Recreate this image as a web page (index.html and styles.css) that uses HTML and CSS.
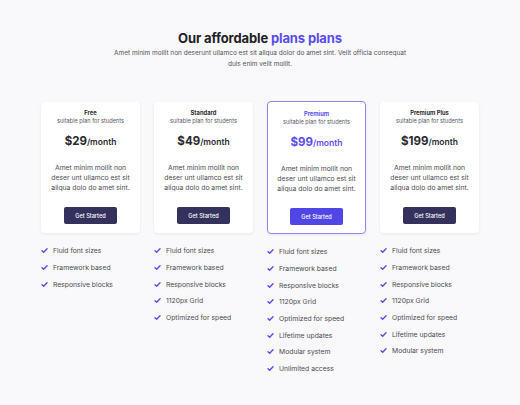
FILE: index.html
```html
<!DOCTYPE html>
<html lang="en">
<head>
<meta charset="utf-8">
<title>Pricing</title>
<link rel="stylesheet" href="styles.css">
</head>
<body>
<main class="page">
  <header class="intro">
    <h1 class="title">Our affordable <span class="accent">plans plans</span></h1>
    <p class="lead">Amet minim mollit non deserunt ullamco est sit aliqua dolor do amet sint. Velit officia consequat duis enim velit mollit.</p>
  </header>

  <section class="plans">
    <div class="plan">
      <div class="card">
        <p class="name">Free</p>
        <p class="sub">suitable plan for students</p>
        <p class="price"><span class="amount">$29</span>/month</p>
        <p class="desc">Amet minim mollit non deser unt ullamco est sit aliqua dolo do amet sint.</p>
        <button class="btn">Get Started</button>
      </div>
      <ul class="features">
        <li><svg class="check" viewBox="0 0 10 10"><path d="M1.5 5.2 L3.8 7.4 L8.6 2.4"/></svg>Fluid font sizes</li>
        <li><svg class="check" viewBox="0 0 10 10"><path d="M1.5 5.2 L3.8 7.4 L8.6 2.4"/></svg>Framework based</li>
        <li><svg class="check" viewBox="0 0 10 10"><path d="M1.5 5.2 L3.8 7.4 L8.6 2.4"/></svg>Responsive blocks</li>
      </ul>
    </div>

    <div class="plan">
      <div class="card">
        <p class="name">Standard</p>
        <p class="sub">suitable plan for students</p>
        <p class="price"><span class="amount">$49</span>/month</p>
        <p class="desc">Amet minim mollit non deser unt ullamco est sit aliqua dolo do amet sint.</p>
        <button class="btn">Get Started</button>
      </div>
      <ul class="features">
        <li><svg class="check" viewBox="0 0 10 10"><path d="M1.5 5.2 L3.8 7.4 L8.6 2.4"/></svg>Fluid font sizes</li>
        <li><svg class="check" viewBox="0 0 10 10"><path d="M1.5 5.2 L3.8 7.4 L8.6 2.4"/></svg>Framework based</li>
        <li><svg class="check" viewBox="0 0 10 10"><path d="M1.5 5.2 L3.8 7.4 L8.6 2.4"/></svg>Responsive blocks</li>
        <li><svg class="check" viewBox="0 0 10 10"><path d="M1.5 5.2 L3.8 7.4 L8.6 2.4"/></svg>1120px Grid</li>
        <li><svg class="check" viewBox="0 0 10 10"><path d="M1.5 5.2 L3.8 7.4 L8.6 2.4"/></svg>Optimized for speed</li>
      </ul>
    </div>

    <div class="plan">
      <div class="card featured">
        <p class="name">Premium</p>
        <p class="sub">suitable plan for students</p>
        <p class="price"><span class="amount">$99</span>/month</p>
        <p class="desc">Amet minim mollit non deser unt ullamco est sit aliqua dolo do amet sint.</p>
        <button class="btn">Get Started</button>
      </div>
      <ul class="features">
        <li><svg class="check" viewBox="0 0 10 10"><path d="M1.5 5.2 L3.8 7.4 L8.6 2.4"/></svg>Fluid font sizes</li>
        <li><svg class="check" viewBox="0 0 10 10"><path d="M1.5 5.2 L3.8 7.4 L8.6 2.4"/></svg>Framework based</li>
        <li><svg class="check" viewBox="0 0 10 10"><path d="M1.5 5.2 L3.8 7.4 L8.6 2.4"/></svg>Responsive blocks</li>
        <li><svg class="check" viewBox="0 0 10 10"><path d="M1.5 5.2 L3.8 7.4 L8.6 2.4"/></svg>1120px Grid</li>
        <li><svg class="check" viewBox="0 0 10 10"><path d="M1.5 5.2 L3.8 7.4 L8.6 2.4"/></svg>Optimized for speed</li>
        <li><svg class="check" viewBox="0 0 10 10"><path d="M1.5 5.2 L3.8 7.4 L8.6 2.4"/></svg>Lifetime updates</li>
        <li><svg class="check" viewBox="0 0 10 10"><path d="M1.5 5.2 L3.8 7.4 L8.6 2.4"/></svg>Modular system</li>
        <li><svg class="check" viewBox="0 0 10 10"><path d="M1.5 5.2 L3.8 7.4 L8.6 2.4"/></svg>Unlimited access</li>
      </ul>
    </div>

    <div class="plan">
      <div class="card">
        <p class="name">Premium Plus</p>
        <p class="sub">suitable plan for students</p>
        <p class="price"><span class="amount">$199</span>/month</p>
        <p class="desc">Amet minim mollit non deser unt ullamco est sit aliqua dolo do amet sint.</p>
        <button class="btn">Get Started</button>
      </div>
      <ul class="features">
        <li><svg class="check" viewBox="0 0 10 10"><path d="M1.5 5.2 L3.8 7.4 L8.6 2.4"/></svg>Fluid font sizes</li>
        <li><svg class="check" viewBox="0 0 10 10"><path d="M1.5 5.2 L3.8 7.4 L8.6 2.4"/></svg>Framework based</li>
        <li><svg class="check" viewBox="0 0 10 10"><path d="M1.5 5.2 L3.8 7.4 L8.6 2.4"/></svg>Responsive blocks</li>
        <li><svg class="check" viewBox="0 0 10 10"><path d="M1.5 5.2 L3.8 7.4 L8.6 2.4"/></svg>1120px Grid</li>
        <li><svg class="check" viewBox="0 0 10 10"><path d="M1.5 5.2 L3.8 7.4 L8.6 2.4"/></svg>Optimized for speed</li>
        <li><svg class="check" viewBox="0 0 10 10"><path d="M1.5 5.2 L3.8 7.4 L8.6 2.4"/></svg>Lifetime updates</li>
        <li><svg class="check" viewBox="0 0 10 10"><path d="M1.5 5.2 L3.8 7.4 L8.6 2.4"/></svg>Modular system</li>
      </ul>
    </div>
  </section>
</main>
</body>
</html>
```

FILE: styles.css
```css
* { box-sizing: border-box; }
html, body { margin: 0; padding: 0; }
body {
  background: #f9f9fb;
  font-family: Inter, "Noto Sans", sans-serif;
  color: #1f2024;
  width: 520px;
  height: 405px;
  overflow: hidden;
}
p { margin: 0; }
.page {
  padding-top: 29px;
  display: flex;
  flex-direction: column;
  align-items: center;
}
.intro { text-align: center; width: 300px; }
.title {
  margin: 0;
  font-size: 13px;
  line-height: 18px;
  font-weight: 700;
  letter-spacing: -0.01em;
  color: #222226;
}
.accent { color: #5b4cf0; }
.lead {
  margin-top: 1px;
  font-size: 6.5px;
  line-height: 11px;
  color: #505259;
}
.plans {
  margin-top: 32px;
  display: grid;
  grid-template-columns: repeat(4, 99px);
  column-gap: 14px;
  align-items: start;
}
.card {
  background: #fff;
  border-radius: 4px;
  box-shadow: 0 1px 3px rgba(20, 20, 40, 0.08);
  height: 131px;
  padding-top: 7px;
  display: flex;
  flex-direction: column;
  align-items: center;
  text-align: center;
}
.card.featured {
  border: 1.5px solid #8f86f3;
  height: 133px;
  margin-top: -1px;
  padding-top: 8px;
}
.name {
  font-size: 5.8px;
  line-height: 8px;
  font-weight: 700;
  color: #2b2b30;
}
.sub {
  font-size: 5.6px;
  line-height: 8px;
  color: #55575e;
}
.price {
  margin-top: 8px;
  font-size: 8.5px;
  line-height: 16px;
  font-weight: 600;
  color: #2a2a30;
}
.amount { font-size: 11.5px; font-weight: 700; }
.featured .name, .featured .price { color: #5b4cf0; }
.desc {
  margin-top: 13px;
  width: 82px;
  font-size: 6.8px;
  line-height: 10px;
  color: #4a4c53;
}
.btn {
  margin-top: 14px;
  width: 53px;
  height: 17px;
  border: 0;
  border-radius: 2px;
  background: #34315c;
  color: #fff;
  font-family: inherit;
  font-size: 5.6px;
  font-weight: 500;
  padding: 0;
}
.featured .btn { background: #4f46e5; }
.features {
  list-style: none;
  margin: 9.5px 0 0;
  padding: 0;
}
.featured + .features { margin-top: 9.5px; }
.features li {
  display: flex;
  align-items: center;
  height: 16.7px;
  font-size: 6.8px;
  color: #4a4c53;
}
.check {
  width: 7px;
  height: 7px;
  margin-right: 5px;
  fill: none;
  stroke: #5b4cf0;
  stroke-width: 2;
  stroke-linecap: round;
  stroke-linejoin: round;
}
```
